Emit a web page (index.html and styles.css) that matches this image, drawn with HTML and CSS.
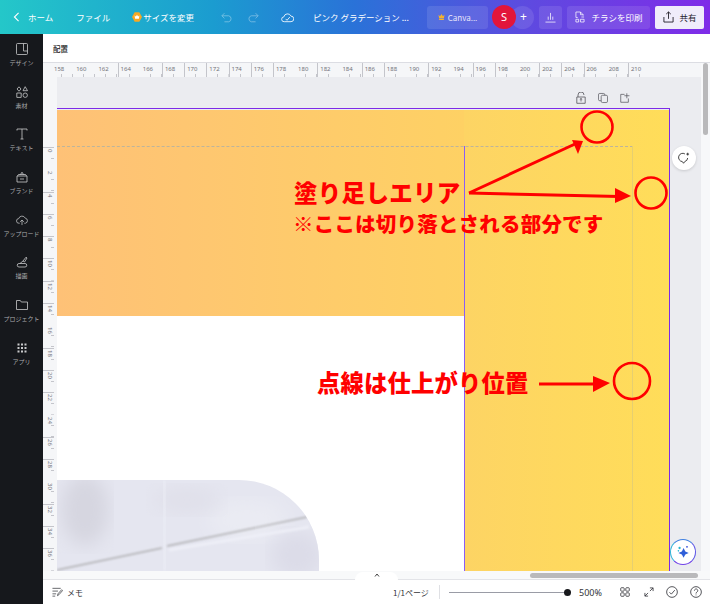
FILE: index.html
```html
<!DOCTYPE html>
<html lang="ja">
<head>
  <meta charset="UTF-8" />
  <title>ピンク グラデーション</title>
  <link rel="stylesheet" href="styles.css">
</head>
<body>

<!-- TOP BAR -->
<header class="topbar">
  <a class="home-link">
    <svg class="icon-back" viewBox="0 0 8 12"><path d="M6.500 1 1.500 6l5 5"/></svg>
    <span>ホーム</span>
  </a>
  <span class="file-link">ファイル</span>
  <span class="resize-link">
    <svg class="icon-crown" viewBox="0 0 10 10"><path d="M2.700.3h4.600L10 5 7.300 9.700H2.700L0 5z" fill="#f7a823"/><path d="M2.600 3.400l1.300 1.200L5 2.800l1.100 1.800 1.300-1.200-.5 3.400H3.100z" fill="#fff"/></svg>
    <span>サイズを変更</span>
  </span>
  <svg class="icon-undo" viewBox="0 0 14 12"><path d="M4 1 1 4l3 3M1 4h8a3.600 3.600 0 0 1 0 7H4"/></svg>
  <svg class="icon-redo" viewBox="0 0 14 12"><path d="M10 1l3 3-3 3M13 4H5a3.600 3.600 0 0 0 0 7h5"/></svg>
  <svg class="icon-cloud" viewBox="0 0 14 11"><path d="M3.500 10a2.600 2.600 0 0 1-.4-5.200A4 4 0 0 1 10.700 4 3 3 0 0 1 10.800 10zM5 7l1.500 1.500L9.500 5"/></svg>
  <span class="doc-title">ピンク グラデーション ...</span>
  <span class="top-btn canva-btn"><svg class="icon-mini-crown" viewBox="0 0 8 7"><path d="M.5 1l1.800 1.600L4 0l1.700 2.600L7.500 1 6.800 5H1.200zM1.200 5.600h5.600V7H1.200z" fill="#f5b32c"/></svg>Canva...</span>
  <span class="avatar">S</span>
  <span class="add-btn">+</span>
  <span class="top-btn chart-btn">
    <svg class="icon-line" viewBox="0 0 12 11"><path d="M.5 10.500h11M3.500 8V4.500M6 8V.5M8.500 8V4.500"/></svg>
  </span>
  <span class="top-btn print-btn">
    <svg class="icon-line icon-print" viewBox="0 0 11 13"><path d="M1 7V1h5l3 3v1M6 1v3h3M1 9v3h3V9zM6 9h4v3H6zM1 7h2M7 6.500h3"/></svg>
    チラシを印刷
  </span>
  <span class="share-btn">
    <svg class="icon-share" viewBox="0 0 12 13"><path d="M6 8.500V1M3.500 3.300 6 1l2.500 2.300M1 6.500V12h10V6.500"/></svg>
    共有
  </span>
</header>

<div class="main">
  <!-- SIDE BAR -->
  <nav class="sidebar">
    <div class="side-item">
      <svg viewBox="0 0 12 12"><rect x=".5" y=".5" width="11" height="11" rx="1"/><path d="M7.500.5v7.500M7.500 8h4"/></svg>
      <span>デザイン</span>
    </div>
    <div class="side-item">
      <svg viewBox="0 0 12 12"><path d="M1 3 3 .8 5 3 3 5.200zM9.200.7l2.300 4H7zM.8 7h4.400v4.400H.8z"/><circle cx="9.200" cy="9.200" r="2.200"/></svg>
      <span>素材</span>
    </div>
    <div class="side-item">
      <svg viewBox="0 0 12 12"><path d="M1 2.500V1h10v1.500M6 1v10M4.500 11h3"/></svg>
      <span>テキスト</span>
    </div>
    <div class="side-item">
      <svg viewBox="0 0 12 12"><path d="M1 5h10v6H1zM1.500 5l1-1.500h7l1 1.500M4.500 3.500 6 1.200l1.500 2.300M4 8h4"/></svg>
      <span>ブランド</span>
    </div>
    <div class="side-item">
      <svg viewBox="0 0 13 12"><path d="M4 9.500H3.200a2.500 2.500 0 0 1-.3-5A3.800 3.800 0 0 1 10 4a2.800 2.800 0 0 1 .2 5.500H9M6.500 11.500V6M4.500 8l2-2 2 2"/></svg>
      <span>アップロード</span>
    </div>
    <div class="side-item">
      <svg viewBox="0 0 12 12"><path d="M7 5 10 1.200l1 .8L8.500 6M3 11h6a1.500 1.500 0 0 0 0-3.500H3A1.700 1.700 0 0 0 3 11zM4 7.500 7 5l1.500 1"/></svg>
      <span>描画</span>
    </div>
    <div class="side-item">
      <svg viewBox="0 0 12 12"><path d="M.5 10.500v-9h3.800l1 1.500h6.200v7.500z"/></svg>
      <span>プロジェクト</span>
    </div>
    <div class="side-item">
      <svg class="icon-apps" viewBox="0 0 10 10"><path d="M.5.500h2v2h-2zM4 .500h2v2H4zM7.500.500h2v2h-2zM.5 4h2v2h-2zM4 4h2v2H4zM7.500 4h2v2h-2zM.5 7.500h2v2h-2zM4 7.500h2v2H4zM7.500 7.500h2v2h-2z"/></svg>
      <span>アプリ</span>
    </div>
  </nav>

  <div class="editor">
    <div class="toolbar"><span>配置</span></div>

    <div class="workspace">
      <div class="work-left">
        <!-- RULER TOP -->
        <div class="ruler-top">
          <span>158</span><span>160</span><span>162</span><span class="major">164</span><span>166</span><span class="major">168</span><span class="major">170</span><span class="major">172</span><span class="major">174</span><span class="major">176</span><span class="major">178</span><span>180</span><span class="major">182</span><span>184</span><span class="major">186</span><span class="major">188</span><span>190</span><span class="major">192</span><span>194</span><span class="major">196</span><span class="major">198</span><span>200</span><span class="major">202</span><span class="major">204</span><span class="major">206</span><span>208</span><span class="major">210</span>
        </div>

        <div class="canvas-row">
          <!-- RULER LEFT -->
          <div class="ruler-left">
            <div class="major">0</div><div>2</div><div class="major">4</div><div class="major">6</div><div class="major">8</div><div class="major">10</div><div class="major">12</div><div class="major">14</div><div>16</div><div class="major">18</div><div class="major">20</div><div class="major">22</div><div>24</div><div class="major">26</div><div class="major">28</div><div>30</div><div class="major">32</div><div class="major">34</div><div class="major">36</div>
          </div>

          <div class="canvas">
            <div class="page-tools">
              <svg viewBox="0 0 10 12"><path d="M2 5V3a3 3 0 0 1 6 0M.8 5h8.400v6.300H.8zM5 9.500v-3M3.800 7.500 5 6.500l1.200 1"/></svg>
              <svg viewBox="0 0 11 11"><rect x=".5" y=".5" width="7" height="8" rx="1.500"/><rect x="3.500" y="2.500" width="7" height="8" rx="1.500" fill="#ebecf0"/></svg>
              <svg viewBox="0 0 11 11"><path d="M5 1.500H.8v8.700h8.400V6M7.500.3v5.500M4.800 3h5.600"/></svg>
            </div>

            <div class="page">
              <div class="page-left">
                <div class="band"></div>
                <div class="white-area">
                  <div class="photo">
                    <svg viewBox="0 0 262 91" preserveAspectRatio="none">
                      <defs><filter id="soft"><feGaussianBlur stdDeviation="9"/></filter><filter id="thin"><feGaussianBlur stdDeviation=".8"/></filter></defs>
                      <ellipse cx="28" cy="30" rx="24" ry="36" fill="#d6d6e0" filter="url(#soft)"/>
                      <ellipse cx="190" cy="40" rx="40" ry="20" fill="#eaebf3" filter="url(#soft)"/>
                      <ellipse cx="130" cy="20" rx="34" ry="14" fill="#e0e0ea" filter="url(#soft)"/>
                      <ellipse cx="240" cy="75" rx="26" ry="24" fill="#dcdce8" filter="url(#soft)"/>
                      <path d="M107 0 108 91" stroke="#eceef6" stroke-width="5" fill="none" filter="url(#thin)" opacity=".5"/>
                      <path d="M112 70 252 47" stroke="#eff0f8" stroke-width="2.500" fill="none" filter="url(#thin)"/>
                      <path d="M0 90 105 68M110 66 250 37" stroke="#aeaeb0" stroke-width="1.400" fill="none" filter="url(#thin)"/>
                    </svg>
                  </div>
                </div>
              </div>
              <div class="page-right"></div>

              <!-- guides -->
              <div class="trim-top"></div>
              <div class="trim-right"></div>
              <div class="fold-line"></div>
            </div>

            <!-- annotations -->
            <svg class="marks" viewBox="0 0 644 494">
              <g fill="none" stroke="#ff0000" stroke-width="2.600">
                <circle cx="540" cy="50" r="15.500"/>
                <circle cx="594" cy="116" r="15.500"/>
                <circle cx="575" cy="304" r="18"/>
                <path d="M412 116 518 67M412 116 562 119.500M482 307H538" stroke-width="3"/>
              </g>
              <g fill="#ff0000">
                <path d="M515 63 526 64 521 77z"/>
                <path d="M558 111 574 119 558 126z"/>
                <path d="M536 299 553 306 536 315z"/>
              </g>
            </svg>
            <p class="note note-bleed">塗り足しエリア</p>
            <p class="note note-sub">※ここは切り落とされる部分です</p>
            <p class="note note-trim">点線は仕上がり位置</p>

            <span class="round-btn comment-btn">
              <svg viewBox="0 0 13 13"><path d="M7.500 2.100A4.500 4.500 0 1 0 4.700 10.400L6 12.200l1.300-1.800A4.500 4.500 0 0 0 10.500 6.500M10.500.8v3M9 2.300h3"/></svg>
            </span>
            <span class="round-btn magic-btn">
              <svg viewBox="0 0 14 14">
                <path d="M7.500 3.500 9 6.500l3 1.300-3 1.300-1.500 3-1.500-3-3-1.300 3-1.300z" fill="#2f5fd8"/>
                <circle cx="4" cy="3.500" r="1" fill="#25b5cf"/>
                <circle cx="3" cy="6" r=".7" fill="#25b5cf"/>
                <circle cx="10.500" cy="2.500" r=".8" fill="#3a4fd8"/>
              </svg>
            </span>
          </div>
        </div>
      </div>
      <div class="scroll-y"><div class="thumb-y"></div></div>
    </div>

    <div class="scroll-x">
      <span class="page-tab"><svg viewBox="0 0 6 4"><path d="M1 3.500 3 1l2 2.500"/></svg></span>
      <div class="thumb-x"></div>
    </div>

    <!-- BOTTOM BAR -->
    <footer class="footer">
      <span class="memo">
        <svg viewBox="0 0 12 10"><path d="M.5 1h9M.5 4h6M.5 7h4M.5 9.500h3M6 9l.5-2 4-4.500 1 1-4 4.500z"/></svg>
        メモ
      </span>
      <span class="pages">1/1ページ</span>
      <span class="foot-divider"></span>
      <span class="slider"><i></i></span>
      <span class="zoom-value">500%</span>
      <svg class="foot-icon" viewBox="0 0 11 11"><rect x=".8" y=".8" width="3.800" height="3.800" rx=".8"/><rect x="6.400" y=".8" width="3.800" height="3.800" rx=".8"/><rect x=".8" y="6.400" width="3.800" height="3.800" rx=".8"/><rect x="6.400" y="6.400" width="3.800" height="3.800" rx=".8"/></svg>
      <svg class="foot-icon foot-expand" viewBox="0 0 11 11"><path d="M6.500 4.500 10 1M6.500 1H10v3.500M4.500 6.500 1 10M1 6.500V10h3.500"/></svg>
      <svg class="foot-icon foot-round" viewBox="0 0 13 13"><circle cx="6.500" cy="6.500" r="5.800"/><path d="M3.800 6.800 5.800 8.800 9.500 4.500"/></svg>
      <svg class="foot-icon foot-round" viewBox="0 0 13 13"><circle cx="6.500" cy="6.500" r="5.800"/><path d="M4.800 5a1.800 1.800 0 1 1 2.800 1.500c-.8.500-1.100.9-1.100 1.700M6.500 9.300v.8"/></svg>
    </footer>
  </div>
</div>

</body>
</html>
```

FILE: styles.css
```css
* {
  box-sizing: border-box;
  margin: 0;
  padding: 0;
}

body, html {
  width: 710px;
  height: 604px;
  overflow: hidden;
  font-family: "Noto Sans CJK JP", "Noto Sans", sans-serif;
  background-color: #fff;
}

svg {
  display: block;
  fill: none;
  stroke: currentColor;
  stroke-width: 1;
}

/* TOP BAR */
.topbar {
  height: 34px;
  display: flex;
  align-items: center;
  color: #fff;
  font-size: 8px;
  background: linear-gradient(90deg, #24c7c9 0%, #1b9cd0 30%, #2a72d8 50%, #5f49e0 75%, #7f2ce8 100%);
}

.home-link {
  display: flex;
  align-items: center;
  margin-left: 13px;
  font-size: 8.500px;
}

.icon-back {
  width: 7px;
  height: 10px;
  stroke-width: 1.300;
  margin-right: 8px;
}

.file-link {
  margin-left: 23px;
  font-size: 8.500px;
}

.resize-link {
  display: flex;
  align-items: center;
  margin-left: 22px;
  font-size: 8.500px;
}

.icon-crown {
  width: 10px;
  height: 10px;
  stroke: none;
  margin-right: 1px;
}

.icon-undo,
.icon-redo {
  width: 12px;
  height: 11px;
  opacity: 0.4;
}

.icon-undo { margin-left: 27px; }
.icon-redo { margin-left: 14px; }

.icon-cloud {
  width: 13px;
  height: 11px;
  margin-left: 22px;
  opacity: 0.9;
}

.doc-title {
  width: 104px;
  margin-left: 19px;
  font-size: 8.500px;
  white-space: nowrap;
}

.top-btn {
  height: 23px;
  display: flex;
  align-items: center;
  justify-content: center;
  background-color: rgba(255, 255, 255, 0.1);
  border-radius: 3px;
}

.canva-btn {
  width: 61px;
  margin-left: 10px;
  font-size: 8px;
  color: #e8e6fb;
}

.icon-mini-crown {
  width: 7px;
  height: 6px;
  stroke: none;
  margin-right: 3px;
}

.avatar {
  width: 24px;
  height: 24px;
  margin-left: 4px;
  border-radius: 50%;
  background-color: #e2153a;
  font-family: "Noto Sans", sans-serif;
  font-size: 11px;
  line-height: 24px;
  text-align: center;
  position: relative;
}

.add-btn {
  width: 23px;
  height: 23px;
  margin-left: -5px;
  padding-left: 2px;
  border-radius: 50%;
  background-color: rgba(255, 255, 255, 0.1);
  font-family: "Noto Sans", sans-serif;
  font-size: 12px;
  line-height: 22px;
  text-align: center;
}

.chart-btn {
  width: 23px;
  margin-left: 5px;
}

.icon-line {
  width: 11px;
  height: 11px;
  stroke-width: 0.800;
}

.print-btn {
  width: 83px;
  margin-left: 5px;
  font-size: 8.500px;
}

.icon-print {
  width: 10px;
  height: 12px;
  margin-right: 7px;
}

.share-btn {
  width: 49px;
  height: 23px;
  margin-left: 5px;
  display: flex;
  align-items: center;
  justify-content: center;
  background-color: #f0ecfb;
  border-radius: 2px;
  color: #26222e;
  font-size: 8.500px;
}

.icon-share {
  width: 11px;
  height: 12px;
  margin-right: 6px;
}

/* LAYOUT */
.main {
  height: 570px;
  display: flex;
}

.sidebar {
  width: 43px;
  flex-shrink: 0;
  padding-top: 9px;
  background-color: #16181c;
  color: #a9aaad;
}

.side-item {
  height: 42.700px;
  display: flex;
  flex-direction: column;
  align-items: center;
  font-size: 6px;
  line-height: 9px;
  white-space: nowrap;
}

.side-item svg {
  width: 12px;
  height: 12px;
  margin-bottom: 3px;
  color: #c9cacc;
  stroke-width: 0.800;
}

.side-item .icon-apps {
  width: 10px;
  height: 10px;
  margin: 1px 0 4px;
  fill: #c9cacc;
  stroke: none;
}

.editor {
  flex: 1;
  min-width: 0;
  display: flex;
  flex-direction: column;
}

.toolbar {
  height: 29px;
  display: flex;
  align-items: center;
  padding-left: 10px;
  font-size: 7.500px;
  font-weight: 500;
  color: #222;
  border-bottom: 1px solid #dcdde3;
}

.workspace {
  height: 508px;
  display: flex;
}

.work-left {
  width: 658px;
  display: flex;
  flex-direction: column;
}

/* RULERS */
.ruler-top {
  height: 14px;
  display: flex;
  padding-left: 8px;
  background-color: #f5f6f8;
  font-family: "Noto Sans", sans-serif;
  font-size: 6px;
  line-height: 13px;
  color: #72737a;
}

.ruler-top span {
  width: 22.200px;
  flex-shrink: 0;
  padding-left: 3px;
  background: repeating-linear-gradient(90deg, transparent 0 10.100px, #c4c5cb 10.100px 11.100px) bottom / 100% 3px no-repeat;
}

.ruler-top .major {
  border-left: 1px solid #c4c5cb;
  padding-left: 2px;
}

.canvas-row {
  flex: 1;
  min-height: 0;
  display: flex;
}

.ruler-left {
  width: 14px;
  flex-shrink: 0;
  padding-top: 70px;
  overflow: hidden;
  background-color: #f5f6f8;
  font-family: "Noto Sans", sans-serif;
  font-size: 6px;
  color: #72737a;
}

.ruler-left div {
  height: 22.300px;
  padding-top: 2px;
  padding-left: 3px;
  line-height: 8px;
  writing-mode: vertical-rl;
  background: repeating-linear-gradient(180deg, transparent 0 10.150px, #c4c5cb 10.150px 11.150px) right / 3px 100% no-repeat;
}

.ruler-left .major {
  border-top: 1px solid #c4c5cb;
  padding-top: 1px;
}

.canvas {
  flex: 1;
  min-width: 0;
  position: relative;
  overflow: hidden;
  padding: 31px 31px 0 0;
  background-color: #ebecf0;
}

.page-tools {
  position: absolute;
  top: 15px;
  left: 519px;
  display: flex;
  gap: 12px;
  color: #55565c;
}

.page-tools svg {
  width: 10px;
  height: 12px;
  stroke-width: 0.800;
}

/* PAGE */
.page {
  height: 100%;
  display: flex;
  padding-top: 1px;
  position: relative;
  border-top: 1px solid #7d2ae8;
  border-right: 1px solid #7d2ae8;
}

.page-left {
  width: 407px;
  display: flex;
  flex-direction: column;
}

.band {
  height: 206px;
  background: linear-gradient(90deg, #fec177, #fed164);
}

.white-area {
  flex: 1;
  display: flex;
  align-items: flex-end;
  background-color: #fff;
}

.photo {
  width: 262px;
  height: 91px;
  overflow: hidden;
  background-color: #e5e6f0;
  border-top-right-radius: 80px;
}

.photo svg {
  width: 100%;
  height: 100%;
  stroke: none;
}

.page-right {
  flex: 1;
  background: linear-gradient(90deg, #fdd464, #ffdd59);
}

.trim-top {
  position: absolute;
  top: 37px;
  left: 0;
  width: 576px;
  border-top: 1px dashed #bdb49c;
}

.trim-right {
  position: absolute;
  top: 37px;
  bottom: 0;
  left: 575px;
  width: 1px;
  background-color: #e6cf70;
}

.fold-line {
  position: absolute;
  top: 37px;
  bottom: 0;
  left: 407px;
  width: 1px;
  background-color: #8b5cf6;
}

/* ANNOTATIONS */
.marks {
  position: absolute;
  top: 0;
  left: 0;
  width: 644px;
  height: 494px;
  stroke: none;
}

.note {
  position: absolute;
  color: #ff0000;
  font-weight: 900;
  white-space: nowrap;
  line-height: 1;
}

.note-bleed {
  top: 104px;
  left: 237px;
  font-size: 23.500px;
  letter-spacing: 0.300px;
}

.note-sub {
  top: 136px;
  left: 236px;
  font-size: 20.500px;
  letter-spacing: 0.200px;
}

.note-trim {
  top: 294px;
  left: 260px;
  font-size: 23.300px;
  letter-spacing: 0.200px;
}

.round-btn {
  position: absolute;
  display: flex;
  align-items: center;
  justify-content: center;
  border-radius: 50%;
  background-color: #fff;
}

.comment-btn {
  top: 69px;
  left: 615px;
  width: 24px;
  height: 24px;
  box-shadow: 0 1px 3px rgba(0, 0, 0, 0.15);
  color: #222;
}

.comment-btn svg {
  width: 12px;
  height: 12px;
  stroke-width: 0.900;
}

.magic-btn {
  top: 462px;
  left: 613px;
  width: 26px;
  height: 26px;
  border: 1px solid #3f7fe0;
  border-bottom-color: #6f3fe8;
  border-right-color: #5c55e6;
  border-left-color: #2fb4d8;
}

.magic-btn svg {
  width: 16px;
  height: 16px;
  stroke: none;
}

/* SCROLLBARS */
.scroll-y {
  flex: 1;
  background-color: #f7f8fa;
  padding: 0 2px 0 2px;
}

.thumb-y {
  width: 5px;
  height: 72px;
  border-radius: 3px;
  background-color: #b9b9bb;
}

.scroll-x {
  height: 9px;
  position: relative;
  background-color: #f8f9fa;
  border-bottom: 1px solid #e3e4e8;
}

.thumb-x {
  position: absolute;
  top: 2px;
  left: 487px;
  width: 168px;
  height: 5px;
  border-radius: 3px;
  background-color: #b9b9bb;
}

.page-tab {
  position: absolute;
  top: 1px;
  left: 312px;
  width: 43px;
  height: 8px;
  background-color: #fff;
  border-radius: 12px 12px 0 0;
  display: flex;
  justify-content: center;
  color: #444;
}

.page-tab svg {
  width: 6px;
  height: 4px;
  margin-top: 1px;
}

/* BOTTOM BAR */
.footer {
  flex: 1;
  display: flex;
  align-items: center;
  font-size: 8px;
  color: #33343a;
  background-color: #fff;
}

.memo {
  display: flex;
  align-items: center;
  margin-left: 9px;
  width: 341px;
  flex-shrink: 0;
}

.memo svg {
  width: 11px;
  height: 10px;
  margin-right: 4px;
  stroke-width: 0.800;
}

.pages {
  width: 46px;
  flex-shrink: 0;
}

.foot-divider {
  width: 1px;
  height: 14px;
  flex-shrink: 0;
  background-color: #dfe0e4;
}

.slider {
  width: 122px;
  height: 1px;
  flex-shrink: 0;
  margin-left: 9px;
  position: relative;
  background-color: #9a9ca6;
}

.slider i {
  position: absolute;
  right: 0;
  top: -3px;
  width: 7px;
  height: 7px;
  border-radius: 50%;
  background-color: #17181c;
}

.zoom-value {
  width: 41px;
  flex-shrink: 0;
  margin-left: 8px;
  font-family: "Noto Sans", sans-serif;
  font-size: 9px;
}

.foot-icon {
  width: 10px;
  height: 10px;
  margin-right: 14px;
  flex-shrink: 0;
  stroke-width: 0.900;
}

.foot-expand {
  margin-right: 12px;
}

.foot-round {
  width: 12px;
  height: 12px;
  margin-right: 12px;
}
```
